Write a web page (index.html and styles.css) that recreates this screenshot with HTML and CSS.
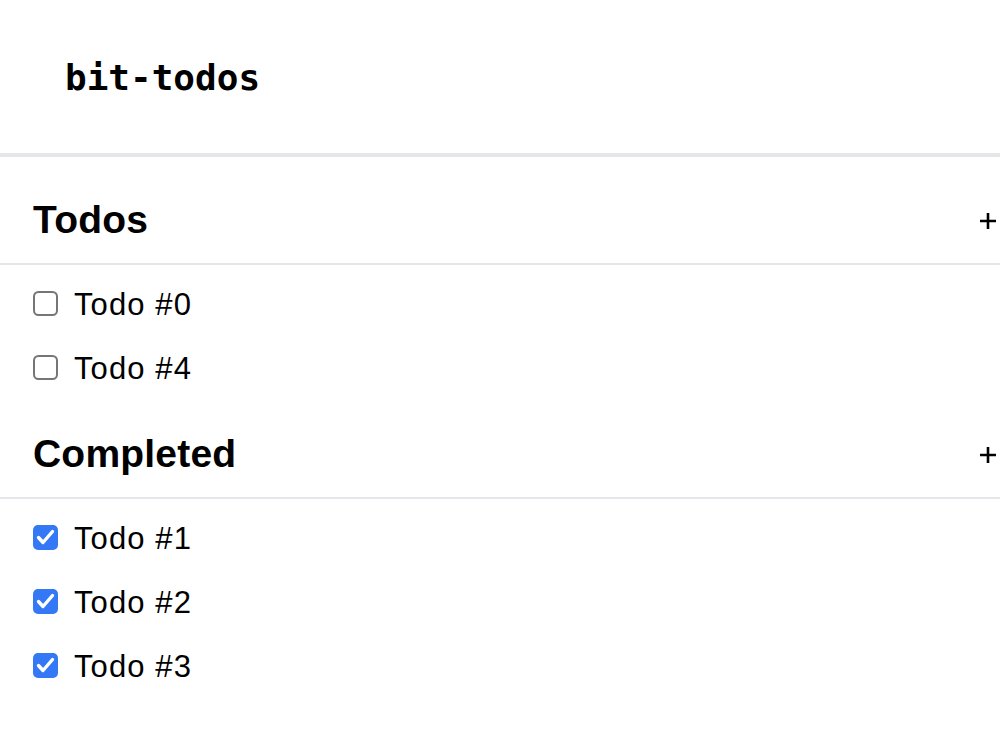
FILE: index.html
```html
<!DOCTYPE html>
<html>
<head>
<meta charset="utf-8">
<title>bit-todos</title>
<link rel="stylesheet" href="styles.css">
</head>
<body>
<header class="app-header">bit-todos</header>
<main class="main">
  <section class="section">
    <div class="section-head">
      <h2 class="section-title">Todos</h2>
      <svg class="plus" width="18" height="18" viewBox="0 0 18 18"><path d="M9 1v16M1 9h16" stroke="#000" stroke-width="2.6" fill="none"/></svg>
    </div>
    <ul class="list">
      <li class="item"><svg class="box" width="25" height="25" viewBox="0 0 25 25"><rect x="1" y="1" width="23" height="23" rx="4.5" fill="#fff" stroke="#767676" stroke-width="2"/></svg><span class="label">Todo #0</span></li>
      <li class="item"><svg class="box" width="25" height="25" viewBox="0 0 25 25"><rect x="1" y="1" width="23" height="23" rx="4.5" fill="#fff" stroke="#767676" stroke-width="2"/></svg><span class="label">Todo #4</span></li>
    </ul>
  </section>
  <section class="section">
    <div class="section-head">
      <h2 class="section-title">Completed</h2>
      <svg class="plus" width="18" height="18" viewBox="0 0 18 18"><path d="M9 1v16M1 9h16" stroke="#000" stroke-width="2.6" fill="none"/></svg>
    </div>
    <ul class="list">
      <li class="item"><svg class="box" width="25" height="25" viewBox="0 0 25 25"><rect x="0" y="0" width="25" height="25" rx="5" fill="#3478f6"/><path d="M5.5 12.5 L10 17.5 L19.5 6.5" stroke="#fff" stroke-width="3.4" fill="none" stroke-linecap="round" stroke-linejoin="round"/></svg><span class="label">Todo #1</span></li>
      <li class="item"><svg class="box" width="25" height="25" viewBox="0 0 25 25"><rect x="0" y="0" width="25" height="25" rx="5" fill="#3478f6"/><path d="M5.5 12.5 L10 17.5 L19.5 6.5" stroke="#fff" stroke-width="3.4" fill="none" stroke-linecap="round" stroke-linejoin="round"/></svg><span class="label">Todo #2</span></li>
      <li class="item"><svg class="box" width="25" height="25" viewBox="0 0 25 25"><rect x="0" y="0" width="25" height="25" rx="5" fill="#3478f6"/><path d="M5.5 12.5 L10 17.5 L19.5 6.5" stroke="#fff" stroke-width="3.4" fill="none" stroke-linecap="round" stroke-linejoin="round"/></svg><span class="label">Todo #3</span></li>
    </ul>
  </section>
</main>
</body>
</html>
```
FILE: styles.css
```css
* { box-sizing: border-box; }
html, body { margin: 0; padding: 0; background: #fff; color: #000; }
body { font-family: "Liberation Sans", Arial, sans-serif; }

.app-header {
  font-family: "DejaVu Sans Mono", monospace;
  font-weight: 700;
  font-size: 36px;
  line-height: 44px;
  height: 157px;
  padding: 56px 0 0 65px;
  border-bottom: 4px solid #e5e5ea;
}

.main { padding-top: 17px; }

.section-head {
  display: flex;
  align-items: center;
  justify-content: space-between;
  padding: 21.5px 3px 19px 33px;
  border-bottom: 2px solid #e5e5ea;
}

.section-title {
  margin: 0;
  font-size: 39px;
  line-height: 48px;
  font-weight: 700;
  letter-spacing: 0.2px;
}

.plus { display: block; margin-top: 2px; }

.list {
  list-style: none;
  margin: 0;
  padding: 8px 0;
}

.item {
  display: flex;
  align-items: center;
  padding: 12px 0 12px 33px;
  font-size: 31px;
  line-height: 40px;
}

.box { display: block; flex: none; margin-bottom: 3px; }

.label { margin-left: 16px; letter-spacing: 1.1px; }
```
